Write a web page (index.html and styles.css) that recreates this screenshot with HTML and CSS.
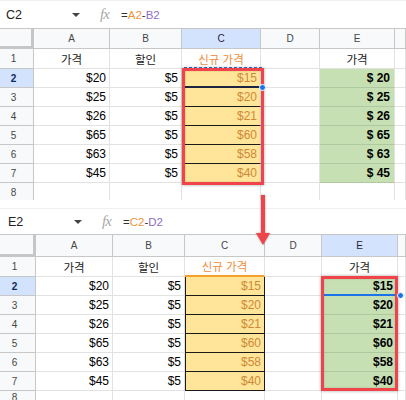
FILE: index.html
```html
<!DOCTYPE html>
<html lang="ko">
<head>
<meta charset="utf-8">
<link rel="stylesheet" href="styles.css">
</head>
<body>
<div class="page">
  <section class="panel panel-top">
    <div class="fbar">
      <span class="ref">C2</span>
      <span class="caret"></span>
      <span class="fx">fx</span>
      <span class="formula">=<span class="fo">A2</span>-<span class="fp">B2</span></span>
    </div>
    <div class="grid grid-top">
      <div class="corner"></div>
      <div class="hdr">A</div>
      <div class="hdr">B</div>
      <div class="hdr sel">C</div>
      <div class="hdr">D</div>
      <div class="hdr">E</div>
      <div class="hdr"></div>

      <div class="rn">1</div>
      <div class="cell ctr ko">가격</div>
      <div class="cell ctr ko">할인</div>
      <div class="cell ctr ko hdr-or">신규 가격</div>
      <div class="cell"></div>
      <div class="cell ctr ko">가격</div>
      <div class="cell"></div>

      <div class="rn rn-sel">2</div>
      <div class="cell num">$20</div>
      <div class="cell num">$5</div>
      <div class="cell num yl or yl-first">$15</div>
      <div class="cell"></div>
      <div class="cell num gr b">$ 20</div>
      <div class="cell"></div>

      <div class="rn">3</div>
      <div class="cell num">$25</div>
      <div class="cell num">$5</div>
      <div class="cell num yl or">$20</div>
      <div class="cell"></div>
      <div class="cell num gr b">$ 25</div>
      <div class="cell"></div>

      <div class="rn">4</div>
      <div class="cell num">$26</div>
      <div class="cell num">$5</div>
      <div class="cell num yl or">$21</div>
      <div class="cell"></div>
      <div class="cell num gr b">$ 26</div>
      <div class="cell"></div>

      <div class="rn">5</div>
      <div class="cell num">$65</div>
      <div class="cell num">$5</div>
      <div class="cell num yl or">$60</div>
      <div class="cell"></div>
      <div class="cell num gr b">$ 65</div>
      <div class="cell"></div>

      <div class="rn">6</div>
      <div class="cell num">$63</div>
      <div class="cell num">$5</div>
      <div class="cell num yl or">$58</div>
      <div class="cell"></div>
      <div class="cell num gr b">$ 63</div>
      <div class="cell"></div>

      <div class="rn">7</div>
      <div class="cell num">$45</div>
      <div class="cell num">$5</div>
      <div class="cell num yl or">$40</div>
      <div class="cell"></div>
      <div class="cell num gr b">$ 45</div>
      <div class="cell"></div>

      <div class="rn">8</div>
      <div class="cell"></div>
      <div class="cell"></div>
      <div class="cell"></div>
      <div class="cell"></div>
      <div class="cell"></div>
      <div class="cell"></div>
    </div>
    <div class="dash-top"></div>
    <div class="redbox redbox-top"></div>
    <div class="handle handle-top"></div>
  </section>

  <section class="panel panel-bottom">
    <div class="fbar">
      <span class="ref">E2</span>
      <span class="caret"></span>
      <span class="fx">fx</span>
      <span class="formula">=<span class="fo">C2</span>-<span class="fp">D2</span></span>
    </div>
    <div class="grid grid-bottom">
      <div class="corner"></div>
      <div class="hdr">A</div>
      <div class="hdr">B</div>
      <div class="hdr">C</div>
      <div class="hdr">D</div>
      <div class="hdr sel">E</div>
      <div class="hdr"></div>

      <div class="rn">1</div>
      <div class="cell ctr ko">가격</div>
      <div class="cell ctr ko">할인</div>
      <div class="cell ctr ko hdr-or hdr-line">신규 가격</div>
      <div class="cell"></div>
      <div class="cell ctr ko">가격</div>
      <div class="cell"></div>

      <div class="rn rn-sel">2</div>
      <div class="cell num">$20</div>
      <div class="cell num">$5</div>
      <div class="cell num yl or boxed">$15</div>
      <div class="cell"></div>
      <div class="cell num gr b gr-sel">$15</div>
      <div class="cell"></div>

      <div class="rn">3</div>
      <div class="cell num">$25</div>
      <div class="cell num">$5</div>
      <div class="cell num yl or boxed">$20</div>
      <div class="cell"></div>
      <div class="cell num gr b">$20</div>
      <div class="cell"></div>

      <div class="rn">4</div>
      <div class="cell num">$26</div>
      <div class="cell num">$5</div>
      <div class="cell num yl or boxed">$21</div>
      <div class="cell"></div>
      <div class="cell num gr b">$21</div>
      <div class="cell"></div>

      <div class="rn">5</div>
      <div class="cell num">$65</div>
      <div class="cell num">$5</div>
      <div class="cell num yl or boxed">$60</div>
      <div class="cell"></div>
      <div class="cell num gr b">$60</div>
      <div class="cell"></div>

      <div class="rn">6</div>
      <div class="cell num">$63</div>
      <div class="cell num">$5</div>
      <div class="cell num yl or boxed">$58</div>
      <div class="cell"></div>
      <div class="cell num gr b">$58</div>
      <div class="cell"></div>

      <div class="rn">7</div>
      <div class="cell num">$45</div>
      <div class="cell num">$5</div>
      <div class="cell num yl or boxed">$40</div>
      <div class="cell"></div>
      <div class="cell num gr b">$40</div>
      <div class="cell"></div>

      <div class="rn rn-last">8</div>
      <div class="cell"></div>
      <div class="cell"></div>
      <div class="cell"></div>
      <div class="cell"></div>
      <div class="cell"></div>
      <div class="cell"></div>
    </div>
    <div class="redbox redbox-bottom"></div>
    <div class="handle handle-bottom"></div>
  </section>

  <div class="arrow">
    <div class="arrow-shaft"></div>
    <div class="arrow-head"></div>
  </div>
</div>
</body>
</html>
```

FILE: styles.css
```css
* { box-sizing: border-box; }

html, body {
  margin: 0;
  padding: 0;
  background: #fff;
}

body {
  font-family: "Liberation Sans", "Noto Sans CJK KR", Arial, sans-serif;
  color: #000;
  width: 406px;
  height: 400px;
  overflow: hidden;
}

.page {
  position: relative;
  width: 406px;
  height: 400px;
}

.panel {
  position: relative;
  height: 200px;
  overflow: hidden;
}

.panel-bottom {
  padding-top: 8px;
  overflow: visible;
}

/* formula bar */
.fbar {
  display: flex;
  align-items: center;
  height: 29px;
  border-top: 1px solid #f0f0f0;
  border-bottom: 1px solid #c7c7c7;
  font-size: 12px;
  color: #222;
}

.panel-bottom .fbar {
  height: 27px;
}

.ref {
  width: 69px;
  padding-left: 6px;
  font-size: 12.5px;
  color: #222;
}

.panel-bottom .ref {
  width: 71px;
  padding-left: 8px;
}

.caret {
  width: 0;
  height: 0;
  border-left: 4px solid transparent;
  border-right: 4px solid transparent;
  border-top: 4px solid #444;
  margin-left: 3px;
  margin-right: 20px;
}

.fx {
  font-family: "Liberation Serif", serif;
  font-style: italic;
  font-size: 15px;
  color: #a8a8a8;
  letter-spacing: -1px;
  width: 21px;
}

.formula {
  font-size: 11.5px;
  color: #333;
}

.fo { color: #f0943a; }
.fp { color: #8e6cc8; }

/* grid */
.grid {
  display: grid;
}

.grid-top {
  grid-template-columns: 34px 76px 72px 79px 59px 75px 11px;
  grid-template-rows: 20px 20px repeat(7, 19px);
}

.grid-bottom {
  grid-template-columns: 36px 77px 72px 80px 57px 76px 8px;
  grid-template-rows: 22px 20px repeat(7, 19px);
}

.corner {
  background: #f8f9fa;
  border-right: 3px solid #c4c7c5;
  border-bottom: 3px solid #c4c7c5;
}

.hdr {
  background: #f8f9fa;
  border-right: 1px solid #c7c7c7;
  border-bottom: 1px solid #c7c7c7;
  font-size: 10px;
  color: #444746;
  display: flex;
  align-items: center;
  justify-content: center;
}

.hdr.sel {
  background: #d3e3fd;
  color: #1f1f3f;
}

.rn {
  background: #f8f9fa;
  border-right: 1px solid #c7c7c7;
  border-bottom: 1px solid #c7c7c7;
  font-size: 10px;
  color: #444746;
  display: flex;
  align-items: center;
  justify-content: center;
  padding-right: 6px;
}

.rn-last {
  align-items: flex-start;
  padding-top: 1px;
}

.rn-sel {
  background: #d3e3fd;
  color: #0b2a5b;
  font-weight: bold;
}

.cell {
  border-right: 1px solid #e2e2e3;
  border-bottom: 1px solid #e2e2e3;
  font-size: 12px;
  display: flex;
  align-items: center;
  white-space: nowrap;
  overflow: hidden;
}

.num {
  justify-content: flex-end;
  padding-right: 3px;
}

.ctr {
  justify-content: center;
}

.ko {
  font-size: 11.5px;
  color: #222;
}

.hdr-or {
  color: #ef8d3c;
}

.hdr-line {
  border-bottom: 2px solid #f5a02a;
}

.yl {
  background: #ffe599;
  border-bottom: 1px solid #1a1a1a;
}

.yl-first {
  border-bottom: 2px solid #1c2540;
}

.boxed {
  border-left: 1px solid #1a1a1a;
  border-right: 1px solid #1a1a1a;
}

.or {
  color: #cf8836;
}

.gr {
  background: #c6e0b4;
  border-bottom: 1px solid #afc8a0;
  padding-right: 4px;
}

.gr-sel {
  border-bottom: 2px solid #1a73e8;
}

.b {
  font-weight: bold;
}

/* overlays */
.redbox {
  position: absolute;
  border: 3px solid #f0434a;
  box-shadow: 0 0 3px rgba(0, 0, 0, 0.35), inset 0 0 2px rgba(0, 0, 0, 0.2);
}

.redbox-top {
  left: 182px;
  top: 68px;
  width: 82px;
  height: 117px;
}

.redbox-bottom {
  left: 321px;
  top: 76px;
  width: 77px;
  height: 115px;
}

.dash-top {
  position: absolute;
  left: 184px;
  top: 67px;
  width: 78px;
  height: 0;
  border-top: 1px dashed #3b6fd8;
}

.handle {
  position: absolute;
  width: 7px;
  height: 7px;
  border-radius: 50%;
  background: #1a73e8;
  border: 1px solid #fff;
}

.handle-top {
  left: 259px;
  top: 84px;
}

.handle-bottom {
  left: 397px;
  top: 92px;
}

.arrow {
  position: absolute;
  left: 256px;
  top: 195px;
  width: 14px;
  height: 50px;
  filter: drop-shadow(0 0 1px rgba(0, 0, 0, 0.35));
}

.arrow-shaft {
  width: 4px;
  height: 38px;
  margin-left: 5px;
  background: #f0434a;
}

.arrow-head {
  width: 0;
  height: 0;
  border-left: 7px solid transparent;
  border-right: 7px solid transparent;
  border-top: 12px solid #f0434a;
}
```
